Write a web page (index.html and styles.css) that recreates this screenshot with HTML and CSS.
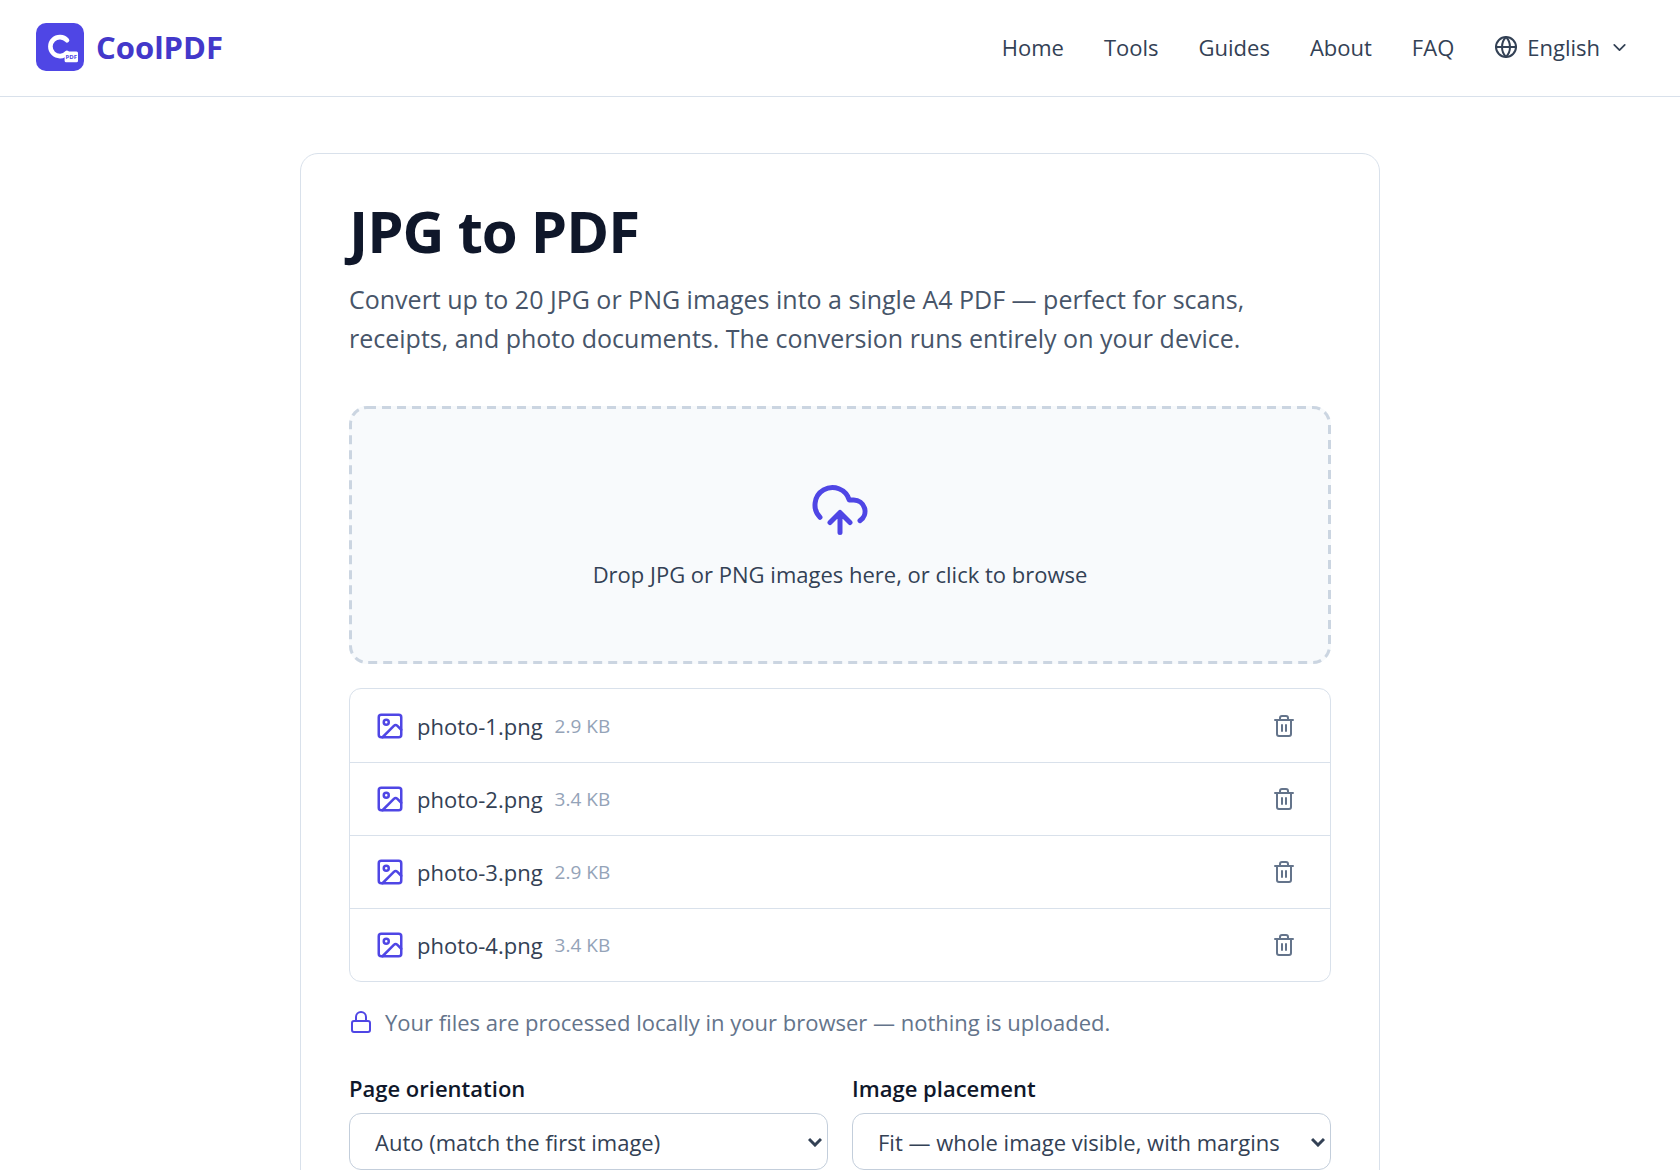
FILE: index.html
```html
<!DOCTYPE html>
<html lang="en">
<head>
    <meta charset="UTF-8">
    <meta name="viewport" content="width=device-width, initial-scale=1.0">
    <title>JPG to PDF - CoolPDF</title>
    <link rel="stylesheet" href="styles.css">
</head>
<body>
    <!-- Shared icon shapes -->
    <svg class="sprite" aria-hidden="true">
        <symbol id="icon-image" viewBox="0 0 24 24">
            <rect x="3" y="3" width="18" height="18" rx="2"/>
            <circle cx="9" cy="9" r="2"/>
            <path d="m21 15-3.086-3.086a2 2 0 0 0-2.828 0L6 21"/>
        </symbol>
        <symbol id="icon-trash" viewBox="0 0 24 24">
            <path d="M3 6h18M19 6v14c0 1-1 2-2 2H7c-1 0-2-1-2-2V6M8 6V4c0-1 1-2 2-2h4c1 0 2 1 2 2v2M10 11v6M14 11v6"/>
        </symbol>
        <symbol id="icon-chevron" viewBox="0 0 24 24">
            <path d="m6 9 6 6 6-6"/>
        </symbol>
    </svg>

    <header class="site-header">
        <a class="brand" href="#">
            <svg class="brand-logo" viewBox="0 0 48 48" aria-hidden="true">
                <rect width="48" height="48" rx="10" fill="#4f46e5"/>
                <path d="M31 17.3A9.5 9.5 0 1 0 31 29.9" fill="none" stroke="#fff" stroke-width="4.6" stroke-linecap="round"/>
                <rect x="28.6" y="28.6" width="13.4" height="10.6" rx="1.5" fill="#fff"/>
                <text x="35.3" y="36" class="brand-badge">PDF</text>
            </svg>
            <span>CoolPDF</span>
        </a>
        <nav class="site-nav">
            <a href="#">Home</a>
            <a href="#">Tools</a>
            <a href="#">Guides</a>
            <a href="#">About</a>
            <a href="#">FAQ</a>
            <button type="button" class="lang-button">
                <svg class="icon icon-small" viewBox="0 0 24 24" aria-hidden="true">
                    <circle cx="12" cy="12" r="10"/>
                    <path d="M12 2a14.5 14.5 0 0 0 0 20 14.5 14.5 0 0 0 0-20M2 12h20"/>
                </svg>
                <span>English</span>
                <svg class="icon icon-chevron" aria-hidden="true"><use href="#icon-chevron"/></svg>
            </button>
        </nav>
    </header>

    <main class="tool-card">
        <h1>JPG to PDF</h1>
        <p class="lead">Convert up to 20 JPG or PNG images into a single A4 PDF — perfect for scans, receipts, and photo documents. The conversion runs entirely on your device.</p>

        <button type="button" class="dropzone">
            <svg class="dropzone-border" aria-hidden="true"><rect width="100%" height="100%" rx="18"/></svg>
            <svg class="icon icon-upload" viewBox="0 0 24 24" aria-hidden="true">
                <path d="M12 13v8M4 14.899A7 7 0 1 1 15.71 8h1.79a4.5 4.5 0 0 1 2.5 8.242M8 17l4-4 4 4"/>
            </svg>
            <span>Drop JPG or PNG images here, or click to browse</span>
        </button>

        <ul class="file-list">
            <li>
                <svg class="icon icon-file" aria-hidden="true"><use href="#icon-image"/></svg>
                <span class="file-name">photo-1.png</span>
                <span class="file-size">2.9 KB</span>
                <button type="button" class="remove-button" aria-label="Remove photo-1.png"><svg class="icon icon-small" aria-hidden="true"><use href="#icon-trash"/></svg></button>
            </li>
            <li>
                <svg class="icon icon-file" aria-hidden="true"><use href="#icon-image"/></svg>
                <span class="file-name">photo-2.png</span>
                <span class="file-size">3.4 KB</span>
                <button type="button" class="remove-button" aria-label="Remove photo-2.png"><svg class="icon icon-small" aria-hidden="true"><use href="#icon-trash"/></svg></button>
            </li>
            <li>
                <svg class="icon icon-file" aria-hidden="true"><use href="#icon-image"/></svg>
                <span class="file-name">photo-3.png</span>
                <span class="file-size">2.9 KB</span>
                <button type="button" class="remove-button" aria-label="Remove photo-3.png"><svg class="icon icon-small" aria-hidden="true"><use href="#icon-trash"/></svg></button>
            </li>
            <li>
                <svg class="icon icon-file" aria-hidden="true"><use href="#icon-image"/></svg>
                <span class="file-name">photo-4.png</span>
                <span class="file-size">3.4 KB</span>
                <button type="button" class="remove-button" aria-label="Remove photo-4.png"><svg class="icon icon-small" aria-hidden="true"><use href="#icon-trash"/></svg></button>
            </li>
        </ul>

        <p class="privacy">
            <svg class="icon icon-small" viewBox="0 0 24 24" aria-hidden="true">
                <rect x="3" y="11" width="18" height="11" rx="2"/>
                <path d="M7 11V7a5 5 0 0 1 10 0v4"/>
            </svg>
            <span>Your files are processed locally in your browser — nothing is uploaded.</span>
        </p>

        <form class="options">
            <div class="field">
                <label for="orientation">Page orientation</label>
                <div class="select-wrap">
                    <select id="orientation">
                        <option>Auto (match the first image)</option>
                    </select>
                    <svg class="select-arrow" viewBox="0 0 14 10" aria-hidden="true"><path d="m1 2 6 6 6-6"/></svg>
                </div>
            </div>
            <div class="field">
                <label for="placement">Image placement</label>
                <div class="select-wrap">
                    <select id="placement">
                        <option>Fit — whole image visible, with margins</option>
                    </select>
                    <svg class="select-arrow" viewBox="0 0 14 10" aria-hidden="true"><path d="m1 2 6 6 6-6"/></svg>
                </div>
            </div>
        </form>
    </main>
</body>
</html>
```
FILE: styles.css
```css
/* General Styles */
* {
    box-sizing: border-box;
}

body {
    margin: 0;
    height: 100vh;
    overflow: hidden;
    font-family: "Open Sans", "Noto Sans", sans-serif;
    font-size: 22px;
    line-height: 32px;
    color: #334155;
    background: #fff;
}

button,
select {
    font: inherit;
    color: inherit;
}

button {
    padding: 0;
    border: none;
    background: none;
    cursor: pointer;
}

.sprite {
    display: none;
}

/* Icons */
.icon {
    flex: none;
    fill: none;
    stroke: currentColor;
    stroke-width: 2;
    stroke-linecap: round;
    stroke-linejoin: round;
}

.icon-small {
    width: 24px;
    height: 24px;
}

.icon-chevron {
    width: 21px;
    height: 21px;
}

.icon-file {
    width: 30px;
    height: 30px;
    color: #4f46e5;
}

.icon-upload {
    width: 60px;
    height: 60px;
    color: #4f46e5;
}

/* Header */
.site-header {
    display: flex;
    justify-content: space-between;
    align-items: center;
    height: 97px;
    padding: 0 50px 2px 36px;
    border-bottom: 1px solid #d9e1eb;
}

.brand {
    display: flex;
    align-items: center;
    gap: 12px;
    font-size: 31px;
    font-weight: 700;
    color: #4338ca;
    text-decoration: none;
}

.brand-logo {
    width: 48px;
    height: 48px;
}

.brand-badge {
    font-size: 6px;
    font-weight: 700;
    text-anchor: middle;
    fill: #4f46e5;
}

.site-nav {
    display: flex;
    align-items: center;
    gap: 40px;
}

.site-nav a {
    color: inherit;
    text-decoration: none;
}

.lang-button {
    display: flex;
    align-items: center;
    gap: 9px;
}

/* Card */
.tool-card {
    max-width: 1080px;
    margin: 56px auto 0;
    padding: 48px;
    border: 1px solid #d9e1eb;
    border-radius: 18px;
}

h1 {
    margin: 0 0 20px;
    font-size: 58px;
    line-height: 58px;
    font-weight: 700;
    letter-spacing: -1px;
    color: #0f172a;
}

.lead {
    margin: 0 0 48px;
    font-size: 25px;
    line-height: 39px;
    color: #475569;
}

/* Drop area */
.dropzone {
    position: relative;
    display: flex;
    flex-direction: column;
    align-items: center;
    gap: 18px;
    width: 100%;
    padding: 74px 24px;
    border-radius: 18px;
    background: #f8fafc;
    overflow: hidden;
}

/* outer half of the stroke is clipped, 3px stay visible */
.dropzone-border {
    position: absolute;
    top: 0;
    left: 0;
    width: 100%;
    height: 100%;
    fill: none;
    stroke: #cbd5e1;
    stroke-width: 6;
    stroke-dasharray: 9 6;
}

/* File list */
.file-list {
    margin: 24px 0;
    padding: 0;
    list-style: none;
    border: 1px solid #d9e1eb;
    border-radius: 12px;
}

.file-list li {
    display: flex;
    align-items: center;
    gap: 12px;
    min-height: 73px;
    padding: 12px 25px;
}

.file-list li + li {
    border-top: 1px solid #d9e1eb;
}

.file-size {
    font-size: 19px;
    color: #94a3b8;
}

.remove-button {
    display: flex;
    margin-left: auto;
    padding: 12px 9px;
    color: #64748b;
}

.privacy {
    display: flex;
    align-items: center;
    gap: 12px;
    margin: 0 0 34px;
    color: #64748b;
}

.privacy .icon {
    color: #4f46e5;
}

/* Options */
.options {
    display: grid;
    grid-template-columns: 1fr 1fr;
    gap: 24px;
}

.field {
    display: flex;
    flex-direction: column;
    gap: 9px;
}

.field label {
    font-weight: 600;
    color: #0f172a;
}

.select-wrap {
    position: relative;
}

.select-wrap select {
    width: 100%;
    height: 57px;
    padding: 0 25px;
    border: 1px solid #c3cedb;
    border-radius: 12px;
    background: #fff;
    appearance: none;
}

.select-arrow {
    position: absolute;
    top: 24px;
    right: 6px;
    width: 14px;
    height: 10px;
    fill: none;
    stroke: #334155;
    stroke-width: 3;
    pointer-events: none;
}
```
